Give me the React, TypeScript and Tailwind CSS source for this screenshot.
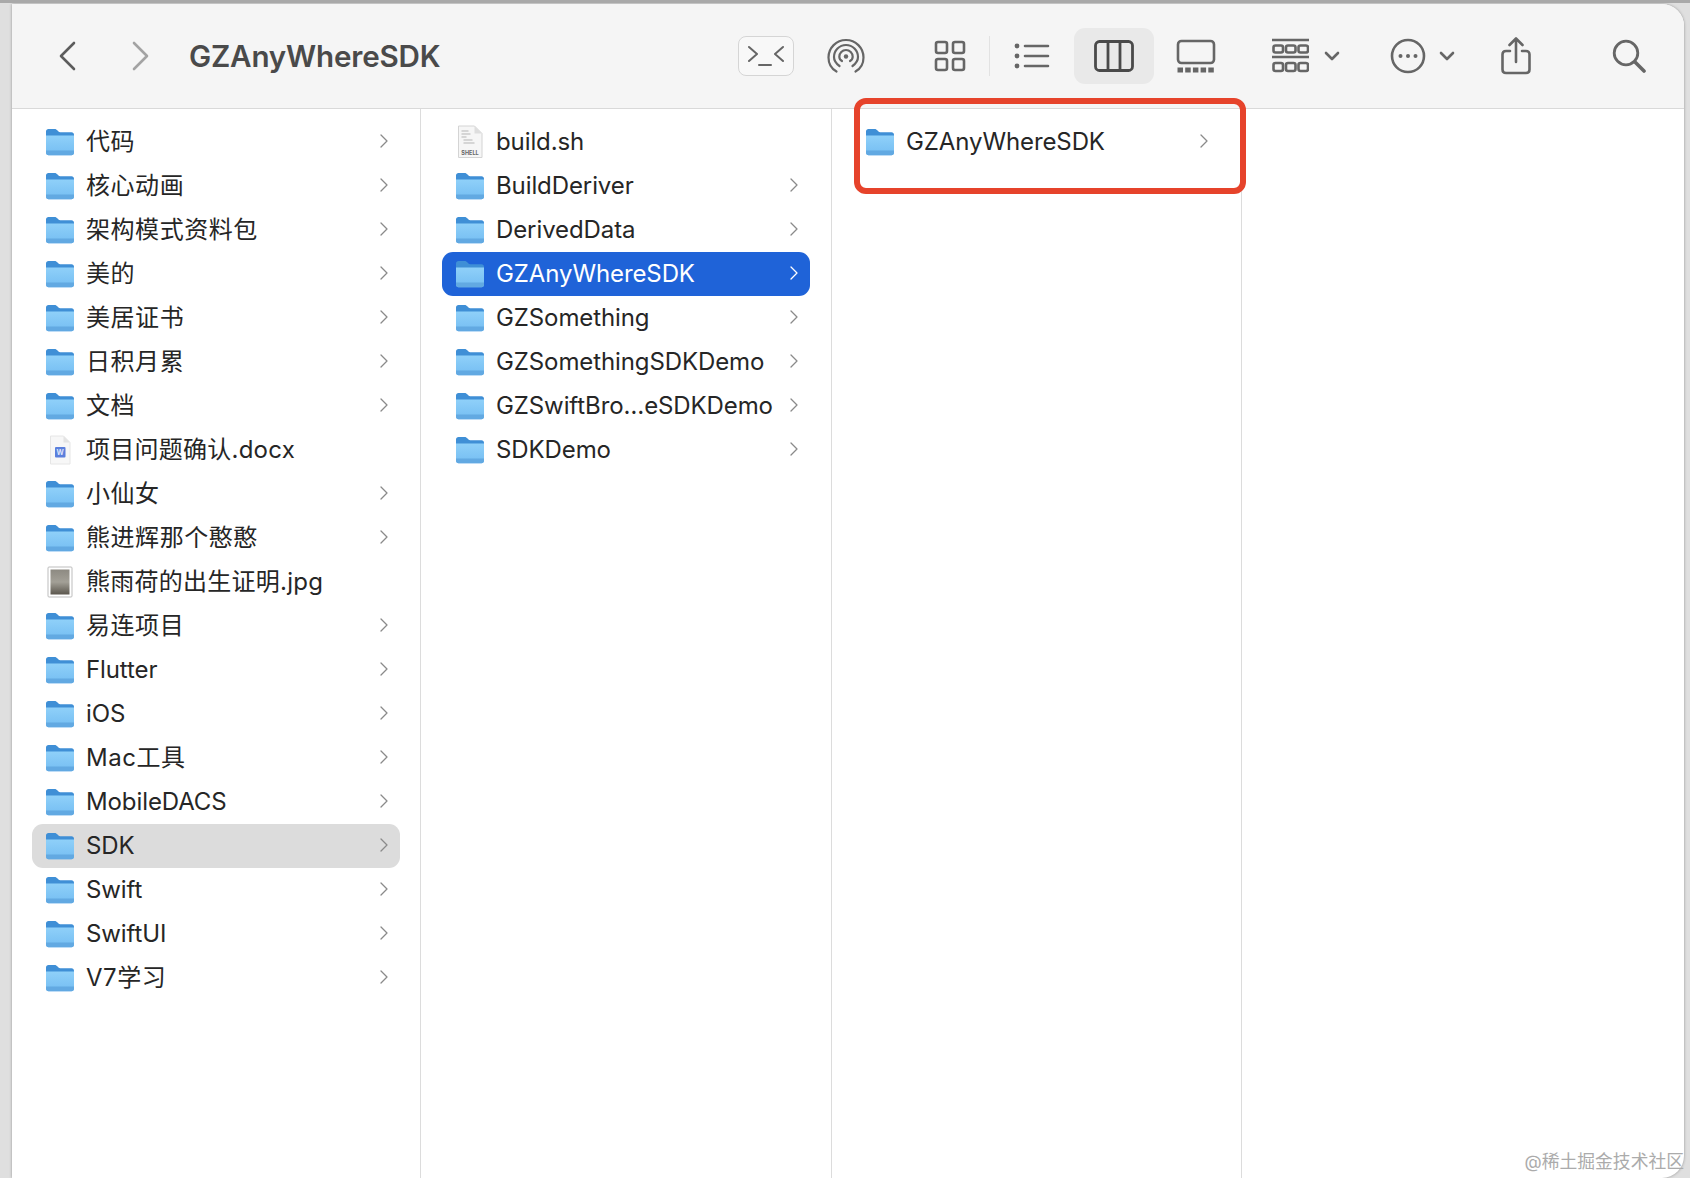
import { useId } from 'react'

type Kind = 'folder' | 'shell' | 'docx' | 'jpg'

interface Item {
  name: string
  kind?: Kind
}

const sidebar: Item[] = [
  { name: '代码' },
  { name: '核心动画' },
  { name: '架构模式资料包' },
  { name: '美的' },
  { name: '美居证书' },
  { name: '日积月累' },
  { name: '文档' },
  { name: '项目问题确认.docx', kind: 'docx' },
  { name: '小仙女' },
  { name: '熊进辉那个憨憨' },
  { name: '熊雨荷的出生证明.jpg', kind: 'jpg' },
  { name: '易连项目' },
  { name: 'Flutter' },
  { name: 'iOS' },
  { name: 'Mac工具' },
  { name: 'MobileDACS' },
  { name: 'SDK' },
  { name: 'Swift' },
  { name: 'SwiftUI' },
  { name: 'V7学习' },
]

const projects: Item[] = [
  { name: 'build.sh', kind: 'shell' },
  { name: 'BuildDeriver' },
  { name: 'DerivedData' },
  { name: 'GZAnyWhereSDK' },
  { name: 'GZSomething' },
  { name: 'GZSomethingSDKDemo' },
  { name: 'GZSwiftBro…eSDKDemo' },
  { name: 'SDKDemo' },
]

function FolderIcon() {
  const id = useId()
  return (
    <svg width="30" height="28" viewBox="0 0 30 28" className="shrink-0">
      <defs>
        <linearGradient id={id} x1="0" y1="0" x2="0" y2="1">
          <stop offset="0" stopColor="#8fd0f9" />
          <stop offset="1" stopColor="#74bdf2" />
        </linearGradient>
      </defs>
      <path d="M1 3.500C1 2 2 1 3.500 1h6.200c1 0 1.600.4 2.300 1.100l1.500 1.500c.5.5 1 .7 1.700.7h11.300c1.500 0 2.500 1 2.500 2.500V12H1z" fill="#3f8fd6" />
      <path d="M1 7.600h28v17.200c0 1.500-1 2.400-2.500 2.400h-23C2 27.200 1 26.300 1 24.800z" fill={`url(#${id})`} />
      <path d="M1 22.600h28v2.200c0 1.500-1 2.400-2.500 2.400h-23C2 27.200 1 26.300 1 24.800z" fill="#62a9e2" />
    </svg>
  )
}

function ShellIcon() {
  return (
    <svg width="30" height="34" viewBox="0 0 30 34" className="shrink-0">
      <path d="M3.500 1h16L27 8.500V32.500H3.500z" fill="#f6f6f6" stroke="#d4d4d4" />
      <path d="M19.500 1v7.500H27z" fill="#dedede" />
      <path d="M6.500 6h7M6.500 9h9M6.500 12h5M8.500 15h9M8.500 18h11" stroke="#b5b5b5" strokeWidth="1" />
      <text x="15" y="29.500" textAnchor="middle" fontSize="5.500" fontWeight="700" fill="#666" fontFamily="Inter, sans-serif">SHELL</text>
    </svg>
  )
}

function DocxIcon() {
  return (
    <svg width="28" height="30" viewBox="0 0 28 30" className="shrink-0">
      <path d="M4.500 1h13L24 7.500V29H4.500z" fill="#f7f7f7" stroke="#e6e6e6" />
      <path d="M17.500 1v6.500H24z" fill="#e4e4e4" />
      <rect x="9" y="12" width="10.500" height="10.500" rx="1" fill="#5b7fdc" />
      <text x="14.200" y="20" textAnchor="middle" fontSize="7" fontWeight="700" fill="#dfe7fb" fontFamily="Inter, sans-serif">W</text>
    </svg>
  )
}

function JpgIcon() {
  const id = useId()
  return (
    <svg width="26" height="32" viewBox="0 0 26 32" className="shrink-0">
      <defs>
        <linearGradient id={id} x1="0" y1="0" x2="0" y2="1">
          <stop offset="0" stopColor="#8d8a82" />
          <stop offset="0.5" stopColor="#a3a097" />
          <stop offset="1" stopColor="#5b564d" />
        </linearGradient>
      </defs>
      <rect x="1" y="1" width="24" height="30" rx="1" fill="#ffffff" stroke="#bdbdbd" />
      <rect x="3.500" y="3.500" width="19" height="25" fill={`url(#${id})`} />
    </svg>
  )
}

function Chevron({ light }: { light?: boolean }) {
  return (
    <svg width="8" height="14" viewBox="0 0 8 14" fill="none" className="mb-[2px] shrink-0">
      <path d="M1 1l6 6-6 6" stroke={light ? '#ffffff' : '#8a8a8a'} strokeWidth="1.300" strokeLinecap="round" strokeLinejoin="round" />
    </svg>
  )
}

function FileIcon({ kind = 'folder' }: { kind?: Kind }) {
  return (
    <span className="flex h-[34px] w-[30px] shrink-0 items-center justify-center">
      {kind === 'folder' && <FolderIcon />}
      {kind === 'shell' && <ShellIcon />}
      {kind === 'docx' && <DocxIcon />}
      {kind === 'jpg' && <JpgIcon />}
    </span>
  )
}

const hasCjk = /[\u4e00-\u9fff]/

function trackingFor(item: Item) {
  if (!hasCjk.test(item.name)) return 'tracking-[-0.1px]'
  return item.kind ? 'tracking-[0.25px]' : 'tracking-[0.55px]'
}

function Row({ item, state }: { item: Item; state?: 'active' | 'muted' }) {
  const kind = item.kind ?? 'folder'
  return (
    <div
      className={`flex h-[44px] items-center rounded-[11px] pl-[13px] pr-[12px] text-[24px] ${
        state === 'active'
          ? 'bg-[#1f63d8] text-white'
          : state === 'muted'
            ? 'bg-[#dcdcdc] text-[#262626]'
            : 'text-[#262626]'
      }`}
    >
      <FileIcon kind={kind} />
      <span className={`ml-[11px] flex-1 truncate leading-[32px] ${trackingFor(item)}`}>{item.name}</span>
      {kind === 'folder' && <Chevron light={state === 'active'} />}
    </div>
  )
}

function Column({ items, active, muted, className }: { items: Item[]; active?: string; muted?: string; className: string }) {
  return (
    <div className={`shrink-0 border-r border-[#dcdcdc] pt-[11px] ${className}`}>
      {items.map((item) => (
        <Row
          key={item.name}
          item={item}
          state={item.name === active ? 'active' : item.name === muted ? 'muted' : undefined}
        />
      ))}
    </div>
  )
}

function NavChevron({ left, dim }: { left?: boolean; dim?: boolean }) {
  return (
    <svg width="18" height="30" viewBox="0 0 18 30" fill="none" className="shrink-0">
      <path
        d={left ? 'M16 2L3 15l13 13' : 'M2 2l13 13L2 28'}
        stroke={dim ? '#a3a3a3' : '#5c5c5c'}
        strokeWidth="2.600"
        strokeLinecap="round"
        strokeLinejoin="round"
      />
    </svg>
  )
}

const toolIcon = '#666666'

function DropChevron() {
  return (
    <svg width="16" height="10" viewBox="0 0 16 10" fill="none" className="shrink-0">
      <path d="M2 2l6 6 6-6" stroke={toolIcon} strokeWidth="2.600" strokeLinecap="round" strokeLinejoin="round" />
    </svg>
  )
}

function Toolbar() {
  return (
    <div className="flex h-[105px] shrink-0 items-center border-b border-[#d9d9d9] bg-[#f5f5f5] pb-[1px] pl-[46px]">
      <NavChevron left />
      <div className="ml-[56px]">
        <NavChevron dim />
      </div>
      <h1 className="ml-[39px] w-[549px] text-[29.600px] font-semibold leading-[36px] tracking-[-0.2px] text-[#4a4a4a]">GZAnyWhereSDK</h1>

      {/* terminal button */}
      <div className="flex h-[40px] w-[56px] items-center justify-center rounded-[8px] border border-[#d5d5d5] bg-[#f8f8f8]">
        <svg width="38" height="24" viewBox="0 0 38 24" fill="none" stroke={toolIcon} strokeWidth="2" strokeLinecap="round" strokeLinejoin="round">
          <path d="M2 3l8 7-8 7M36 3l-8 7 8 7" />
          <path d="M12 21h12" />
        </svg>
      </div>

      {/* airdrop */}
      <svg className="ml-[33px]" width="38" height="36" viewBox="0 0 38 36" fill="none" stroke={toolIcon} strokeWidth="2.200" strokeLinecap="round">
        <path d="M9.500 33.500C4 30.500 1.500 25 1.500 19.500a17.500 17.500 0 0 1 35 0c0 5.500-2.500 11-8 14" />
        <path d="M12.500 28C9 25.500 7 22.500 7 19a12 12 0 0 1 24 0c0 3.500-2 6.500-5.500 9" />
        <path d="M15 23c-1.800-1-2.700-2.500-2.700-4.300a6.700 6.700 0 0 1 13.400 0c0 1.800-.9 3.300-2.700 4.300" />
        <circle cx="19" cy="18.500" r="2.200" fill={toolIcon} stroke="none" />
      </svg>

      {/* grid */}
      <svg className="ml-[69px]" width="32" height="32" viewBox="0 0 32 32" fill="none" stroke={toolIcon} strokeWidth="2.600">
        <rect x="2" y="2" width="11" height="11" rx="2" />
        <rect x="19" y="2" width="11" height="11" rx="2" />
        <rect x="2" y="19" width="11" height="11" rx="2" />
        <rect x="19" y="19" width="11" height="11" rx="2" />
      </svg>

      <div className="ml-[23px] h-[40px] w-px bg-[#e2e2e2]" />

      {/* list */}
      <svg className="ml-[24px]" width="36" height="28" viewBox="0 0 36 28" fill="none" stroke={toolIcon} strokeWidth="2.600" strokeLinecap="round">
        <path d="M11 4h23M11 14h23M11 24h23" />
        <circle cx="3" cy="4" r="2.400" fill={toolIcon} stroke="none" />
        <circle cx="3" cy="14" r="2.400" fill={toolIcon} stroke="none" />
        <circle cx="3" cy="24" r="2.400" fill={toolIcon} stroke="none" />
      </svg>

      {/* columns, current view */}
      <div className="ml-[24px] flex h-[56px] w-[80px] items-center justify-center rounded-[11px] bg-[#e9e9e9]">
        <svg width="40" height="32" viewBox="0 0 40 32" fill="none" stroke="#4a4a4a" strokeWidth="2.800">
          <rect x="1.500" y="1.500" width="37" height="29" rx="4" />
          <path d="M14 1.500v29M26 1.500v29" />
        </svg>
      </div>

      {/* gallery */}
      <svg className="ml-[22px]" width="40" height="34" viewBox="0 0 40 34" fill="none" stroke={toolIcon} strokeWidth="2.600">
        <rect x="2" y="2" width="36" height="22" rx="3.500" />
        <path d="M1.500 31h37" strokeWidth="5" strokeDasharray="5.500 2.200" />
      </svg>

      {/* group by */}
      <svg className="ml-[56px]" width="37" height="36" viewBox="0 0 37 36" fill="none" stroke={toolIcon} strokeWidth="2.600">
        <path d="M0 2h37M0 19h37" />
        <rect x="1.500" y="7.500" width="9.500" height="7" rx="2" />
        <rect x="14" y="7.500" width="9.500" height="7" rx="2" />
        <rect x="26.500" y="7.500" width="9.500" height="7" rx="2" />
        <rect x="1.500" y="25" width="9.500" height="8" rx="2" />
        <rect x="14" y="25" width="9.500" height="8" rx="2" />
        <rect x="26.500" y="25" width="9.500" height="8" rx="2" />
      </svg>
      <div className="ml-[15px]">
        <DropChevron />
      </div>

      {/* more */}
      <svg className="ml-[50px]" width="36" height="36" viewBox="0 0 36 36" fill="none" stroke={toolIcon} strokeWidth="2.600">
        <circle cx="18" cy="18" r="16" />
        <circle cx="10.500" cy="18" r="2" fill={toolIcon} stroke="none" />
        <circle cx="18" cy="18" r="2" fill={toolIcon} stroke="none" />
        <circle cx="25.500" cy="18" r="2" fill={toolIcon} stroke="none" />
      </svg>
      <div className="ml-[13px]">
        <DropChevron />
      </div>

      {/* share */}
      <svg className="ml-[46px]" width="30" height="38" viewBox="0 0 30 38" fill="none" stroke={toolIcon} strokeWidth="2.600" strokeLinecap="round" strokeLinejoin="round">
        <path d="M9 14H5c-2.200 0-3.500 1.300-3.500 3.500v15c0 2.200 1.300 3.500 3.500 3.500h20c2.200 0 3.500-1.300 3.500-3.500v-15c0-2.200-1.300-3.500-3.500-3.500h-4" />
        <path d="M15 25V2M8.500 8L15 1.500 21.500 8" />
      </svg>

      {/* search */}
      <svg className="ml-[81px]" width="34" height="34" viewBox="0 0 34 34" fill="none" stroke={toolIcon} strokeWidth="2.800" strokeLinecap="round">
        <circle cx="14" cy="14" r="11.800" />
        <path d="M23 23l9 9" strokeWidth="3.600" />
      </svg>
    </div>
  )
}

export default function App() {
  return (
    <div
      className="relative flex h-[1178px] w-[1690px] overflow-hidden bg-[#dfdfdf] pl-[12px] pr-[6px] pt-[4px]"
      style={{ fontFamily: 'Inter, "Noto Sans CJK SC", sans-serif' }}
    >
      <div className="absolute inset-x-0 top-0 h-[3px] bg-[#a9a9a9]" />
      <div className="flex min-w-0 flex-1 flex-col overflow-hidden rounded-r-[22px] bg-white shadow-[0_0_3px_rgba(0,0,0,0.35)]">
        <Toolbar />
        <div className="flex min-h-0 flex-1">
          <Column items={sidebar} muted="SDK" className="w-[409px] px-[20px]" />
          <Column items={projects} active="GZAnyWhereSDK" className="w-[411px] px-[21px]" />
          <Column items={[{ name: 'GZAnyWhereSDK' }]} className="w-[410px] pl-[20px] pr-[21px]" />
          <div className="flex-1" />
        </div>
      </div>

      {/* annotation drawn over the screenshot */}
      <div className="absolute left-[854px] top-[98px] h-[96px] w-[392px] rounded-[12px] border-[6px] border-[#e6432b]" />

      <span className="absolute bottom-[6px] right-[6px] text-[17.800px] leading-[20px] text-[#ababab]">@稀土掘金技术社区</span>
    </div>
  )
}
